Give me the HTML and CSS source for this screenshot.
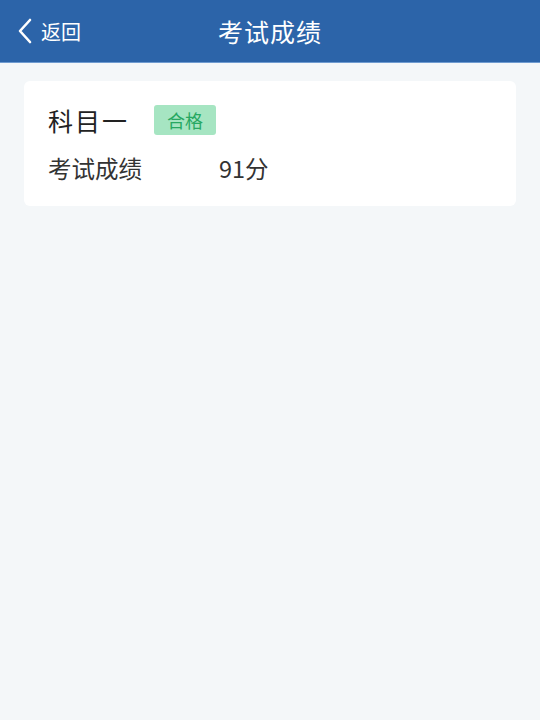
FILE: index.html
```html
<!DOCTYPE html>
<html lang="zh-CN">
<head>
  <meta charset="UTF-8">
  <title>考试成绩</title>
  <link rel="stylesheet" href="styles.css">
</head>
<body>
  <header class="topbar">
    <a class="back" href="#">
      <svg class="back-icon" width="16" height="26" viewBox="0 0 16 26"><path d="M13 2 L3 13 L13 24" fill="none" stroke="#fff" stroke-width="2.6" stroke-linecap="round" stroke-linejoin="round"/></svg>
      <span>返回</span>
    </a>
    <h1 class="title">考试成绩</h1>
  </header>

  <main class="content">
    <div class="card">
      <div class="subject">
        <span class="subject-name">科目一</span>
        <span class="badge">合格</span>
      </div>
      <div class="score-row">
        <span class="score-label">考试成绩</span>
        <span class="score-value">91分</span>
      </div>
    </div>
  </main>
</body>
</html>
```

FILE: styles.css
```css
html, body { margin: 0; padding: 0; }
body { background: #f4f7f9; font-family: "Noto Sans CJK SC", "Noto Sans", sans-serif; color: #333; min-height: 720px; }

.topbar { height: 62px; background: #2c64a9; border-bottom: 1px solid #6f9bd0; display: flex; align-items: center; justify-content: center; position: relative; }
.back { position: absolute; left: 17px; top: 0; height: 62px; display: flex; align-items: center; gap: 8px; color: #fff; text-decoration: none; font-size: 20px; }
.back-icon { display: block; }
.title { margin: 0; color: #fff; font-size: 25px; font-weight: 400; letter-spacing: 1px; }

.content { padding: 18px 24px; }
.card { background: #fff; border-radius: 6px; padding: 21px 24px 21px; }
.subject { display: flex; align-items: center; gap: 25px; }
.subject-name { font-size: 25px; letter-spacing: 2px; color: #222; }
.badge { background: #a6e5c2; color: #27a862; font-size: 18px; padding: 2px 13px; border-radius: 3px; }
.score-row { display: flex; align-items: center; margin-top: 13px; font-size: 23.5px; }
.score-label { width: 171px; }
.score-value { color: #333; }
```
